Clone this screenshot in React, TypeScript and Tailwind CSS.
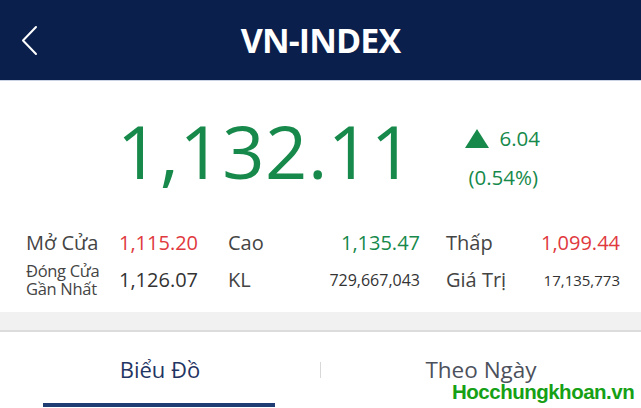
const GREEN = 'text-[#16894b]';
const RED = 'text-[#e0393e]';

export default function App() {
  return (
    <div className="relative w-[641px] h-[408px] overflow-hidden bg-white font-['Open_Sans',sans-serif]">
      {/* Header */}
      <header className="relative flex items-center justify-center h-[81px] bg-[#0b1f4d] border-b border-[#c9d3e3]">
        <svg className="absolute left-[20px] top-[25px] w-[20px] h-[31px]" viewBox="0 0 20 31" fill="none">
          <polyline points="16,2 3,15.5 16,29" stroke="white" strokeWidth="2" strokeLinecap="round" strokeLinejoin="round" />
        </svg>
        <h1 className="text-[34px] font-bold tracking-tight text-white">VN-INDEX</h1>
      </header>

      {/* Price */}
      <div className="flex items-start h-[144px] pl-[117px] pt-[33px]">
        <p className={`text-[74px] leading-none tracking-[0.5px] ${GREEN}`}>1,132.11</p>
        <div className={`ml-[52px] mt-[14px] text-[20.5px] leading-none ${GREEN}`}>
          <div className="flex items-center gap-[10px]">
            <span className="w-0 h-0 border-l-[12px] border-r-[12px] border-b-[19px] border-l-transparent border-r-transparent border-b-[#16894b]" />
            <span>6.04</span>
          </div>
          <div className="mt-[18px] ml-[3px]">(0.54%)</div>
        </div>
      </div>

      {/* Stats */}
      <div className="pl-[26px] text-[20px] leading-none text-[#333]">
        <div className="flex items-center h-[36px]">
          <span className="w-[93px] text-[#444]">Mở Cửa</span>
          <span className={`w-[109px] ${RED}`}>1,115.20</span>
          <span className="w-[72px] text-[#444]">Cao</span>
          <span className={`w-[120px] text-right ${GREEN}`}>1,135.47</span>
          <span className="w-[26px]" />
          <span className="w-[74px] text-[#444]">Thấp</span>
          <span className={`w-[100px] text-right ${RED}`}>1,099.44</span>
        </div>
        <div className="flex items-center h-[38px]">
          <span className="w-[93px] flex flex-col text-[16.5px] leading-[18px] tracking-[-0.3px] text-[#444]">
            <span>Đóng Cửa</span>
            <span>Gần Nhất</span>
          </span>
          <span className="w-[109px]">1,126.07</span>
          <span className="w-[72px] text-[#444]">KL</span>
          <span className="w-[120px] text-right text-[16px]">729,667,043</span>
          <span className="w-[26px]" />
          <span className="w-[74px] text-[#444]">Giá Trị</span>
          <span className="w-[100px] text-right text-[15px]">17,135,773</span>
        </div>
      </div>

      {/* Separator */}
      <div className="mt-[13px] h-[20px] bg-[#f1f1f1] border-b-2 border-[#dcdcdc]" />

      {/* Tabs */}
      <div className="relative flex items-center h-[75px]">
        <div className="flex-1 flex justify-center text-[22px] text-[#1f3563]">Biểu Đồ</div>
        <div className="w-px h-[16px] bg-[#d8d8d8]" />
        <div className="flex-1 flex justify-center text-[22.5px] text-[#4c515c]">Theo Ngày</div>
        <div className="absolute left-[43px] bottom-0 w-[232px] h-[4px] bg-[#1f3d73]" />
      </div>

      {/* Watermark */}
      <span className="absolute left-[452px] top-[377px] text-[20.5px] font-bold text-[#16a016] font-['Liberation_Sans',sans-serif] tracking-[-0.5px]">
        Hocchungkhoan.vn
      </span>
    </div>
  );
}
